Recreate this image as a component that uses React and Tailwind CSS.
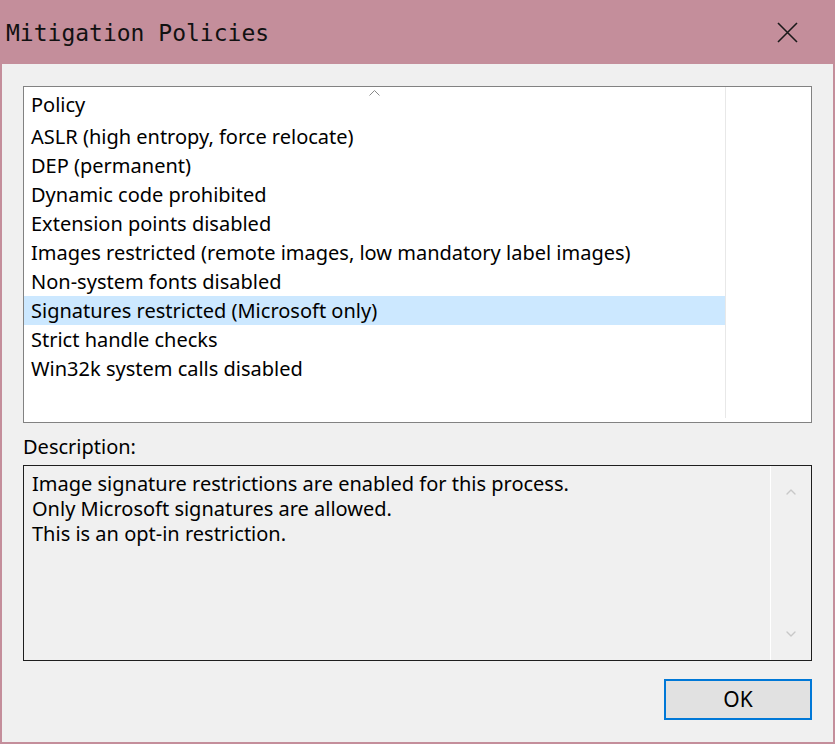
import { ChevronUp, ChevronDown } from "lucide-react";

const policies = [
  "ASLR (high entropy, force relocate)",
  "DEP (permanent)",
  "Dynamic code prohibited",
  "Extension points disabled",
  "Images restricted (remote images, low mandatory label images)",
  "Non-system fonts disabled",
  "Signatures restricted (Microsoft only)",
  "Strict handle checks",
  "Win32k system calls disabled",
];

const selected = "Signatures restricted (Microsoft only)";

const uiFont = { fontFamily: '"Noto Sans", "Open Sans", sans-serif' };

export default function App() {
  return (
    <div className="w-[835px] h-[744px] bg-[#c48e9b] flex flex-col px-[2px] pb-[2px]">
      {/* title bar */}
      <div className="h-[64px] shrink-0 flex items-center justify-between pl-[4px] pr-[35px]">
        <span
          className="text-[23px] text-[#111] leading-none pt-[3px]"
          style={{ fontFamily: '"DejaVu Sans Mono", monospace' }}
        >
          Mitigation Policies
        </span>
        <svg width="21" height="21" viewBox="0 0 21 21" className="text-[#1a1a1a]">
          <path d="M1 1 L20 20 M20 1 L1 20" stroke="currentColor" strokeWidth="1.6" fill="none" />
        </svg>
      </div>

      {/* body */}
      <div className="flex-1 bg-[#f0f0f0] px-[21px] pt-[22px] flex flex-col text-black" style={uiFont}>
        {/* list view */}
        <div className="h-[337px] border border-[#828282] bg-white flex">
          <div className="w-[701px] flex flex-col">
            <div className="relative h-[35px] flex items-center pl-[7px] text-[20px]">
              Policy
              <svg
                width="11"
                height="6"
                viewBox="0 0 11 6"
                className="absolute left-[345px] top-[3px]"
              >
                <path d="M0.5 5.5 L5.5 0.5 L10.5 5.5" stroke="#888" strokeWidth="1" fill="none" />
              </svg>
            </div>
            {policies.map((p) => (
              <div
                key={p}
                className={`h-[29px] flex items-center pl-[7px] text-[20px] whitespace-nowrap ${
                  p === selected ? "bg-[#cce8ff]" : ""
                }`}
              >
                {p}
              </div>
            ))}
          </div>
          <div className="w-px bg-[#e8e8e8] mb-[4px]" />
          <div className="flex-1" />
        </div>

        {/* description */}
        <div className="mt-[12px] h-[24px] flex items-center text-[20px]">Description:</div>
        <div className="mt-[6px] h-[196px] border border-[#1e1e1e] bg-[#f0f0f0] flex">
          <div className="flex-1 pl-[8px] pt-[5px] text-[20px] leading-[25px]">
            <div>Image signature restrictions are enabled for this process.</div>
            <div>Only Microsoft signatures are allowed.</div>
            <div>This is an opt-in restriction.</div>
          </div>
          <div className="w-px bg-white" />
          <div className="w-[40px] flex flex-col items-center justify-between py-[18px] text-[#c8c8c8]">
            <ChevronUp size={16} strokeWidth={2} />
            <ChevronDown size={16} strokeWidth={2} />
          </div>
        </div>

        {/* button row */}
        <div className="mt-[18px] flex justify-end">
          <button className="w-[148px] h-[41px] border-2 border-[#0078d7] bg-[#e1e1e1] text-[21px] flex items-center justify-center">
            OK
          </button>
        </div>
      </div>
    </div>
  );
}
